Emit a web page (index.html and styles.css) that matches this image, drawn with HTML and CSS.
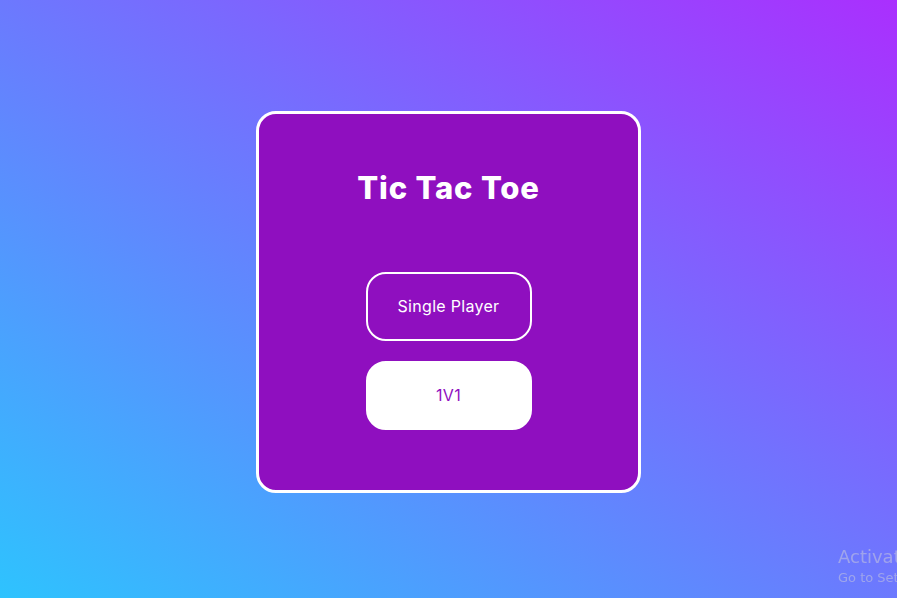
FILE: index.html
```html
<!DOCTYPE html>
<html lang="en">
<head>
<meta charset="utf-8">
<title>Tic Tac Toe</title>
<link rel="stylesheet" href="styles.css">
</head>
<body>
<main class="stage">
  <section class="card">
    <h1 class="title">Tic Tac Toe</h1>
    <div class="menu">
      <button class="btn btn-outline">Single Player</button>
      <button class="btn btn-solid">1V1</button>
    </div>
  </section>
</main>
<div class="watermark">
  <div class="wm-title">Activate Windows</div>
  <div class="wm-sub">Go to Settings to activate Windows.</div>
</div>
</body>
</html>
```
FILE: styles.css
```css
* { box-sizing: border-box; }
html, body { height: 100%; }
body {
  margin: 0;
  font-family: "Inter", "Noto Sans", sans-serif;
  background: linear-gradient(to top right, #2ec3fe 0%, #aa2ffe 100%);
  overflow: hidden;
}
.stage {
  height: 100%;
  display: flex;
  align-items: center;
  justify-content: center;
  padding-top: 5px;
}
.card {
  width: 385px;
  height: 382px;
  background: #8f0fbf;
  border: 3px solid #ffffff;
  border-radius: 20px;
  display: flex;
  flex-direction: column;
  align-items: center;
  padding-top: 54px;
}
.title {
  margin: 0;
  color: #fff;
  font-size: 31px;
  font-weight: 800;
  line-height: 40px;
  letter-spacing: 0.8px;
}
.menu {
  margin-top: 64px;
  display: flex;
  flex-direction: column;
  gap: 20px;
}
.btn {
  width: 166px;
  height: 69px;
  border-radius: 20px;
  font-family: "Inter", "Noto Sans", sans-serif;
  font-size: 16px;
  font-weight: 400;
  letter-spacing: 0.3px;
  cursor: pointer;
}
.btn-outline {
  background: transparent;
  border: 2px solid #ffffff;
  color: #ffffff;
}
.btn-solid {
  background: #ffffff;
  border: 2px solid #ffffff;
  color: #8f0fbf;
}
.watermark {
  position: fixed;
  left: 838px;
  top: 545px;
  white-space: nowrap;
  color: rgba(200, 200, 220, 0.55);
  font-family: "DejaVu Sans", "Noto Sans", sans-serif;
}
.wm-title { font-size: 18px; line-height: 24px; }
.wm-sub { font-size: 13px; line-height: 18px; }
```
